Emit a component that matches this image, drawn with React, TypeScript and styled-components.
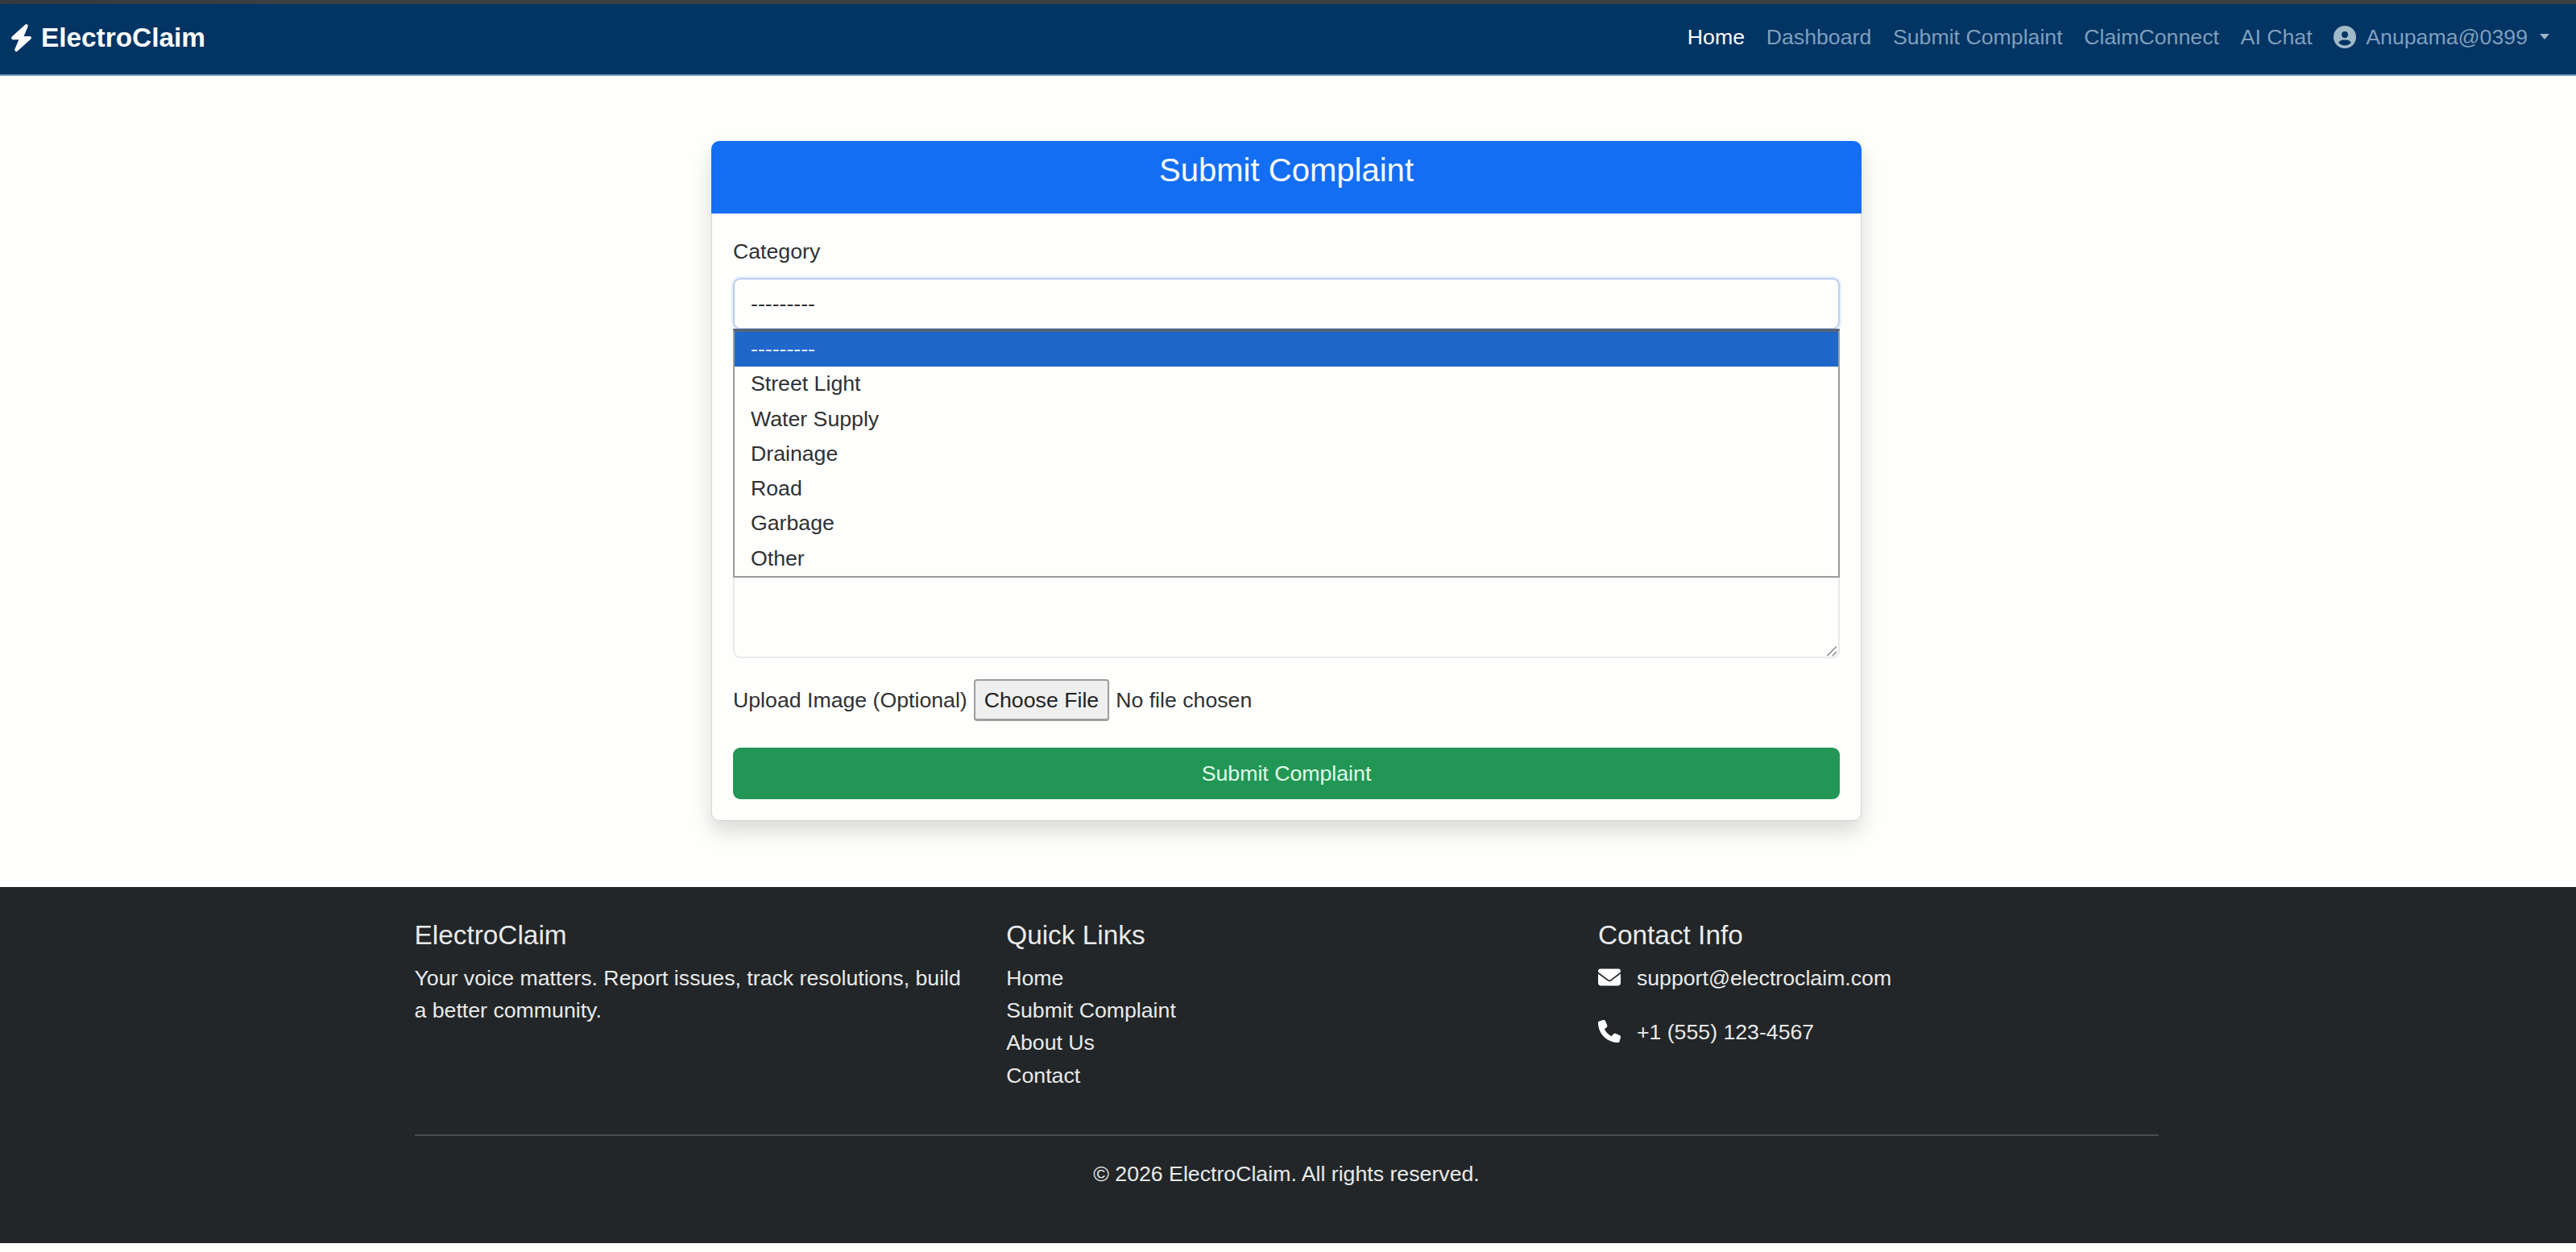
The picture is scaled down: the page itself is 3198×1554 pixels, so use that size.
import React from "react";
import styled, { createGlobalStyle } from "styled-components";
import { FaBolt, FaCircleUser, FaEnvelope, FaPhone } from "react-icons/fa6";

const GlobalStyle = createGlobalStyle`
  *, *::before, *::after { box-sizing: border-box; }
  html { font-size: 26.7px; }
  body {
    margin: 0;
    background: #fefefd;
    color: #2f3133;
    font-family: "Liberation Sans", Arial, sans-serif;
    font-size: 1rem;
    line-height: 1.5;
  }
`;

const WindowEdge = styled.div`
  height: 5px;
  background: linear-gradient(90deg, #34393e, #3d4041 12%, #3d4041);
`;

const Navbar = styled.nav`
  display: flex;
  align-items: center;
  justify-content: space-between;
  height: 89px;
  padding: 0 33px 3px 12px;
  background: #023464;
  border-bottom: 2px solid #5d86b0;
`;

const Brand = styled.a`
  display: flex;
  align-items: center;
  color: #fcfdff;
  font-size: 1.25rem;
  font-weight: 700;
  line-height: 40px;

  svg {
    width: 29px;
    height: 34px;
    margin-right: 10px;
  }
`;

const NavLinks = styled.div`
  display: flex;
  align-items: center;
  gap: 26.7px;
  padding-bottom: 2px;
`;

const NavLink = styled.a<{ $active?: boolean }>`
  display: flex;
  align-items: center;
  color: ${(p) => (p.$active ? "#ffffff" : "#7f9fbc")};

  svg {
    width: 28px;
    height: 28px;
    margin-right: 12px;
    color: #a0bac8;
  }
`;

const Caret = styled.span`
  margin-left: 15px;
  border-top: 7px solid #9fb4c6;
  border-left: 6.5px solid transparent;
  border-right: 6.5px solid transparent;
`;

const Main = styled.main`
  display: flex;
  justify-content: center;
  padding: 81px 4px 82px 0;
`;

const Card = styled.section`
  width: 1428px;
  border: 1px solid #d4d5d6;
  border-radius: 10px;
  background: #fefefd;
  box-shadow: 0 13px 27px rgba(0, 0, 0, 0.15);
`;

const CardHeader = styled.header`
  height: 90px;
  margin: -1px -1px 0;
  padding-top: 12px;
  border-radius: 10px 10px 0 0;
  background: #146ef3;
  color: #f4fbff;
  text-align: center;
`;

const CardTitle = styled.h4`
  margin: 0;
  font-size: 1.5rem;
  font-weight: 400;
  line-height: 1.2;
`;

const Form = styled.form`
  display: flex;
  flex-direction: column;
  padding: 27px 26px 26px;
`;

const Label = styled.label`
  line-height: 40px;
`;

const SelectWrap = styled.div`
  position: relative;
  margin-top: 13px;
`;

const SelectBox = styled.div`
  height: 64px;
  padding: 10px 20px;
  border: 2px solid #bccdf0;
  border-radius: 9px;
  box-shadow: 0 0 0 2px rgba(13, 110, 253, 0.1);
`;

const OptionList = styled.ul`
  position: absolute;
  z-index: 2;
  top: 63px;
  left: 0;
  right: 0;
  margin: 0;
  padding: 0;
  list-style: none;
  border: 2px solid #999b9b;
  border-top: 4px solid #536578;
  background: #fefefd;
`;

const Option = styled.li<{ $selected?: boolean }>`
  height: 43.3px;
  padding: 0 20px;
  line-height: 43px;
  color: ${(p) => (p.$selected ? "#e6f0ff" : "inherit")};
  background: ${(p) => (p.$selected ? "#1f68c9" : "transparent")};
`;

const TextArea = styled.div`
  display: flex;
  align-items: flex-end;
  justify-content: flex-end;
  height: 160px;
  margin-top: 248px;
  border: 2px solid #e8e9ea;
  border-radius: 9px;

  svg {
    display: block;
    width: 14px;
    height: 14px;
  }
`;

const FileRow = styled.div`
  display: flex;
  align-items: center;
  height: 52px;
  margin: 26px 0 33px;
`;

const FileButton = styled.button`
  height: 52px;
  margin: 0 8px;
  padding: 1px 11px 0;
  border: 2px solid #9c9d9d;
  border-bottom-width: 3px;
  border-radius: 4px;
  background: #efefef;
  color: #222;
  font: inherit;
`;

const SubmitButton = styled.button`
  height: 64px;
  padding: 0;
  border: 0;
  border-radius: 9px;
  background: #229655;
  color: #e2fbea;
  font: inherit;
`;

const Footer = styled.footer`
  height: 442px;
  padding: 40px 4px 0 0;
  background: #222628;
  color: #e9eaea;
`;

const Container = styled.div`
  width: 2165px;
  margin: 0 auto;
`;

const Columns = styled.div`
  display: grid;
  grid-template-columns: 694px 694px 694px;
  column-gap: 40.7px;
  height: 267px;
`;

const FooterTitle = styled.h5`
  margin: 0 0 0.5rem;
  font-size: 1.25rem;
  font-weight: 400;
  line-height: 1.2;
`;

const FooterText = styled.p`
  margin: 0;
`;

const LinkList = styled.div`
  display: flex;
  flex-direction: column;
`;

const ContactRow = styled.div`
  display: flex;
  align-items: center;
  height: 40px;
  margin-bottom: 26.7px;

  svg {
    width: 28px;
    height: 28px;
    margin: 0 20px 3px 0;
    color: #fff;
  }
`;

const Copyright = styled.p`
  margin: 0;
  padding-top: 27px;
  border-top: 2px solid #4b4e50;
  text-align: center;
`;

const navItems = ["Home", "Dashboard", "Submit Complaint", "ClaimConnect", "AI Chat"];
const options = ["---------", "Street Light", "Water Supply", "Drainage", "Road", "Garbage", "Other"];
const quickLinks = ["Home", "Submit Complaint", "About Us", "Contact"];

export default function App() {
  return (
    <>
      <GlobalStyle />
      <WindowEdge />
      <Navbar>
        <Brand>
          <FaBolt preserveAspectRatio="none" />
          ElectroClaim
        </Brand>
        <NavLinks>
          {navItems.map((item, i) => (
            <NavLink key={item} $active={i === 0}>
              {item}
            </NavLink>
          ))}
          <NavLink>
            <FaCircleUser />
            Anupama@0399
            <Caret />
          </NavLink>
        </NavLinks>
      </Navbar>
      <Main>
        <Card>
          <CardHeader>
            <CardTitle>Submit Complaint</CardTitle>
          </CardHeader>
          <Form>
            <Label>Category</Label>
            <SelectWrap>
              <SelectBox>{options[0]}</SelectBox>
              <OptionList>
                {options.map((option, i) => (
                  <Option key={option} $selected={i === 0}>
                    {option}
                  </Option>
                ))}
              </OptionList>
            </SelectWrap>
            <TextArea>
              <svg viewBox="0 0 14 14" fill="none" stroke="#8c8e8f" strokeWidth="1.6">
                <path d="M0.5 13 L12 1.5 M7 13 L12 8" />
              </svg>
            </TextArea>
            <FileRow>
              <span>Upload Image (Optional)</span>
              <FileButton type="button">Choose File</FileButton>
              <span>No file chosen</span>
            </FileRow>
            <SubmitButton type="button">Submit Complaint</SubmitButton>
          </Form>
        </Card>
      </Main>
      <Footer>
        <Container>
          <Columns>
            <div>
              <FooterTitle>ElectroClaim</FooterTitle>
              <FooterText>Your voice matters. Report issues, track resolutions, build a better community.</FooterText>
            </div>
            <div>
              <FooterTitle>Quick Links</FooterTitle>
              <LinkList>
                {quickLinks.map((link) => (
                  <a key={link}>{link}</a>
                ))}
              </LinkList>
            </div>
            <div>
              <FooterTitle>Contact Info</FooterTitle>
              <ContactRow>
                <FaEnvelope />
                support@electroclaim.com
              </ContactRow>
              <ContactRow>
                <FaPhone />
                +1 (555) 123-4567
              </ContactRow>
            </div>
          </Columns>
          <Copyright>© 2026 ElectroClaim. All rights reserved.</Copyright>
        </Container>
      </Footer>
    </>
  );
}
